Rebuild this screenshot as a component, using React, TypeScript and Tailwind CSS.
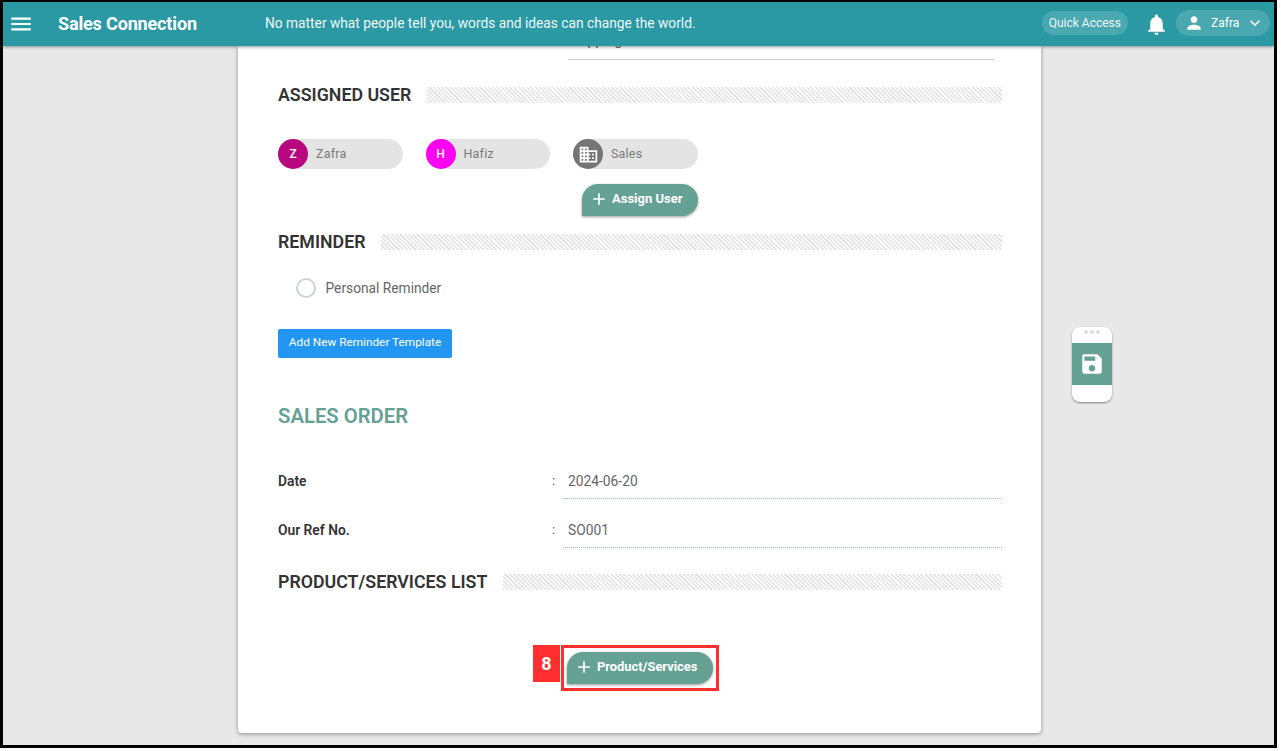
import { MdAdd, MdBusiness, MdKeyboardArrowDown, MdMenu, MdNotifications, MdPerson, MdSave } from "react-icons/md";

const hatch =
  "h-[16px] flex-1 bg-[repeating-linear-gradient(45deg,#e4e4e4_0px,#e4e4e4_1.5px,#ffffff_1.5px,#ffffff_3px)]";

function SectionTitle({ title, className }: { title: string; className: string }) {
  return (
    <div className={`flex h-[20px] items-center gap-[15.5px] ${className}`}>
      <h2 className="text-[17.8px] leading-[20px] font-semibold text-[#333333] whitespace-nowrap">{title}</h2>
      <div className={hatch} />
    </div>
  );
}

function UserChip({ name, initial, color }: { name: string; initial?: string; color: string }) {
  return (
    <div className="flex h-[30px] w-[124.5px] items-center rounded-full bg-[#e4e4e4]">
      <div className={`flex h-[30px] w-[30px] items-center justify-center rounded-full text-[12px] font-medium text-white ${color}`}>
        {initial ?? <MdBusiness size={21} />}
      </div>
      <span className="ml-2 text-[12.5px] tracking-[0.2px] text-[#7b7b7b]">{name}</span>
    </div>
  );
}

function FieldRow({ label, value, className }: { label: string; value: string; className: string }) {
  return (
    <div className={`flex h-[35px] items-center ${className}`}>
      <span className="w-[274px] text-[13.8px] font-semibold text-[#333333]">{label}</span>
      <span className="w-[11px] text-[13px] text-[#555555]">:</span>
      <div className="flex h-[35px] flex-1 items-center border-b border-dotted border-[#8fbcb1] pt-[1px] pl-[5px] text-[13.8px] text-[#666666]">
        {value}
      </div>
    </div>
  );
}

export default function App() {
  return (
    <div
      className="h-[751px] w-[1281px] overflow-hidden bg-white pr-[4px] pb-[3px]"
      style={{ fontFamily: "Roboto, 'Liberation Sans', sans-serif" }}
    >
      <div className="flex h-full flex-col border-[3px] border-t-2 border-black bg-[#e8e8e8]">
        <header className="relative z-10 flex h-[44px] shrink-0 items-center bg-[#2a99a4] text-white shadow-[0_1px_3px_rgba(0,0,0,0.4)]">
          <MdMenu size={26} className="ml-[5px]" />
          <div className="mb-[2px] ml-[24px] w-[207px] text-[18px] font-bold tracking-[-0.15px]">Sales Connection</div>
          <div className="mb-[1px] text-[13.75px] text-[#eef7f8]">No matter what people tell you, words and ideas can change the world.</div>
          <div className="mb-[2px] ml-auto flex h-[24px] items-center rounded-full bg-[#4aa8b1] px-[7px] text-[12px] text-[#eef7f8]">Quick Access</div>
          <MdNotifications size={25} className="ml-[16px]" />
          <div className="mr-[4px] mb-[2px] ml-[7px] flex h-[26px] w-[94px] items-center rounded-full bg-[#4aa8b1] pl-[8px] text-[12px]">
            <MdPerson size={20} />
            <span className="ml-[7px]">Zafra</span>
            <MdKeyboardArrowDown size={20} className="ml-[6px]" />
          </div>
        </header>

        <main className="relative flex min-h-0 flex-1 justify-center pl-[2px]">
          <section className="mb-[12px] flex w-[803px] flex-col rounded-b-[4px] bg-white pr-[39px] pl-[40px] shadow-[0_1px_4px_rgba(0,0,0,0.4)]">
            {/* row scrolled mostly under the header */}
            <div className="-mt-[16px] flex h-[30px] items-start">
              <span className="w-[274px] text-[13.8px] font-semibold text-[#333333]">Terms</span>
              <span className="w-[11px] text-[13px] text-[#555555]">:</span>
              <div className="mr-[8px] ml-[5px] h-[30px] flex-1 border-b border-[#cfcfcf] text-[14px] text-[#666666]">Shipping</div>
            </div>
            <SectionTitle title="ASSIGNED USER" className="mt-[25px]" />
            <div className="mt-[34px] flex gap-[23px]">
              <UserChip name="Zafra" initial="Z" color="bg-[#b8087f]" />
              <UserChip name="Hafiz" initial="H" color="bg-[#ff00f2]" />
              <UserChip name="Sales" color="bg-[#757575]" />
            </div>
            <button className="mt-[15px] ml-[304px] flex h-[32px] w-[116px] items-center rounded-full rounded-bl-[12px] bg-[#65a194] pb-[2px] pl-[7px] text-[13px] font-bold text-white shadow-[0_1px_3px_rgba(0,0,0,0.4)]">
              <MdAdd size={20} />
              <span className="ml-[3px]">Assign User</span>
            </button>
            <SectionTitle title="REMINDER" className="mt-[16px]" />
            <label className="mt-[26px] ml-[18px] flex items-center">
              <span className="h-[20px] w-[20px] rounded-full border-2 border-[#ccd2d8] bg-white" />
              <span className="ml-[9.5px] text-[13.75px] text-[#666666]">Personal Reminder</span>
            </label>
            <button className="mt-[30px] h-[29px] w-[174px] rounded-[2px] bg-[#2196f3] text-[11.8px] text-white">
              Add New Reminder Template
            </button>
            <h1 className="mt-[46px] text-[20.3px] leading-[24px] font-semibold text-[#65a194]">SALES ORDER</h1>
            <FieldRow label="Date" value="2024-06-20" className="mt-[36px]" />
            <FieldRow label="Our Ref No." value="SO001" className="mt-[14px]" />
            <SectionTitle title="PRODUCT/SERVICES LIST" className="mt-[24px]" />
            <div className="mt-[53px] flex justify-center">
              <div className="relative border-[3px] border-[#ff2f2f] px-[3px] pt-[4px] pb-[4px]">
                <div className="absolute top-[-3px] left-[-31px] flex h-[37px] w-[27px] items-center justify-center bg-[#ff2f2f] text-[18px] font-bold text-white">
                  8
                </div>
                <button className="flex h-[32px] w-[146px] items-center rounded-full rounded-bl-[12px] bg-[#65a194] pb-[1px] pl-[7px] text-[12.9px] font-bold text-white shadow-[0_1px_3px_rgba(0,0,0,0.4)]">
                  <MdAdd size={20} />
                  <span className="ml-[3px]">Product/Services</span>
                </button>
              </div>
            </div>
          </section>

          <aside className="absolute top-[281px] left-[1069px] flex h-[75px] w-[40px] flex-col rounded-[8px] bg-white shadow-[0_1px_2px_rgba(0,0,0,0.45)]">
            <div className="flex h-[16px] justify-center gap-[2px] pt-[3px]">
              <span className="h-[4px] w-[4px] rounded-full bg-[#dddddd]" />
              <span className="h-[4px] w-[4px] rounded-full bg-[#dddddd]" />
              <span className="h-[4px] w-[4px] rounded-full bg-[#dddddd]" />
            </div>
            <div className="flex h-[42px] items-center justify-center bg-[#65a194] text-white">
              <MdSave size={26} />
            </div>
          </aside>
        </main>
      </div>
    </div>
  );
}
